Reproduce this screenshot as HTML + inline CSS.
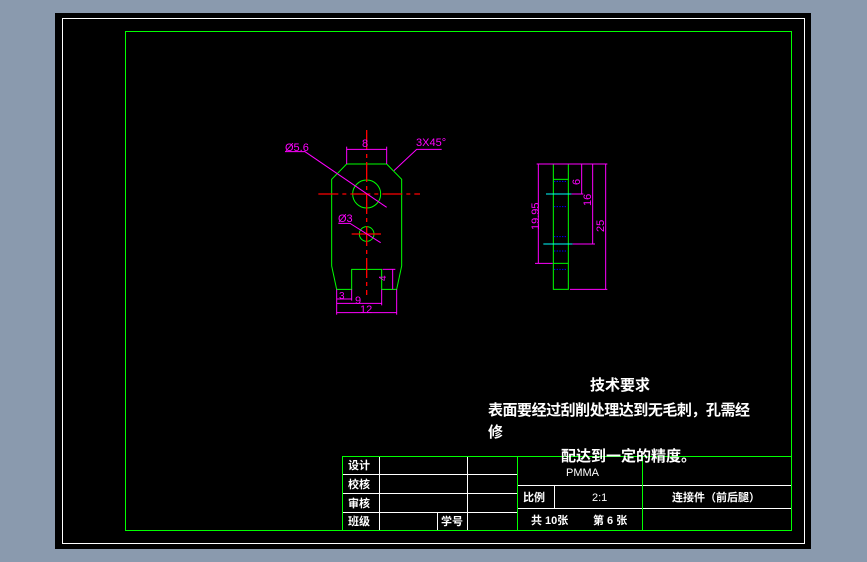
<!DOCTYPE html>
<html><head><meta charset="utf-8"><style>
html,body{margin:0;padding:0;width:867px;height:562px;overflow:hidden;background:#8a9aae;}
svg{display:block}
.cn{font-family:"Liberation Sans","WenQuanYi Zen Hei","Noto Sans CJK SC",sans-serif;fill:#fff;font-weight:bold}
.dm{font-family:"Liberation Sans",sans-serif;fill:#f0f;}
</style></head><body>
<svg width="867" height="562" viewBox="0 0 867 562" xmlns="http://www.w3.org/2000/svg">
<rect x="55" y="13" width="756" height="536" fill="#000"/>
<rect x="62.5" y="18.5" width="742" height="525" fill="none" stroke="#fff" stroke-width="1"/>
<rect x="125.5" y="31.5" width="666" height="499" fill="none" stroke="#0f0" stroke-width="1"/>

<g transform="translate(270,120) scale(0.33333)" fill="none" stroke-width="3">
 <polygon points="230,132 350,132 395,178 395,438 380,508 335,508 335,448 245,448 245,508 200,508 185,438 185,178" stroke="#0f0"/>
 <circle cx="290" cy="222" r="42" stroke="#0f0"/>
 <circle cx="290" cy="342" r="22" stroke="#0f0"/>
 <g stroke="#f00" stroke-width="4">
  <line x1="290" y1="30" x2="290" y2="525" stroke-dasharray="60,12,12,12"/>
  <line x1="145" y1="222" x2="450" y2="222" stroke-dasharray="60,12,12,12"/>
  <line x1="245" y1="342" x2="333" y2="342"/>
 </g>
 <g stroke="#f0f">
  <line x1="230" y1="88" x2="350" y2="88"/><line x1="230" y1="80" x2="230" y2="132"/><line x1="350" y1="80" x2="350" y2="132"/>
  <polyline points="45,95 105,95 350,262"/>
  <polyline points="515,88 440,88 372,152"/>
  <polyline points="205,310 240,310 332,368"/>
  <line x1="368" y1="448" x2="368" y2="508"/><line x1="338" y1="448" x2="376" y2="448"/>
  <line x1="200" y1="537" x2="245" y2="537"/><line x1="200" y1="550" x2="335" y2="550"/><line x1="200" y1="578" x2="380" y2="578"/>
  <line x1="200" y1="508" x2="200" y2="584"/><line x1="245" y1="508" x2="245" y2="542"/><line x1="335" y1="508" x2="335" y2="556"/><line x1="380" y1="508" x2="380" y2="584"/>
 </g>
 <rect x="850" y="132" width="45" height="376" stroke="#0f0"/>
 <line x1="850" y1="178" x2="895" y2="178" stroke="#0f0"/><line x1="850" y1="430" x2="895" y2="430" stroke="#0f0"/>
 <line x1="828" y1="222" x2="905" y2="222" stroke="#0ff"/><line x1="820" y1="372" x2="908" y2="372" stroke="#0ff"/>
 <g stroke="#00f" stroke-dasharray="4,4"><line x1="852" y1="184" x2="890" y2="184"/><line x1="852" y1="260" x2="890" y2="260"/><line x1="852" y1="350" x2="890" y2="350"/><line x1="852" y1="393" x2="890" y2="393"/><line x1="852" y1="448" x2="890" y2="448"/></g>
 <g stroke="#f0f">
  <line x1="800" y1="132" x2="1012" y2="132"/><line x1="900" y1="508" x2="1012" y2="508"/>
  <line x1="805" y1="132" x2="805" y2="430"/><line x1="795" y1="430" x2="848" y2="430"/>
  <line x1="935" y1="132" x2="935" y2="222"/><line x1="905" y1="222" x2="940" y2="222"/>
  <line x1="968" y1="132" x2="968" y2="372"/><line x1="908" y1="372" x2="975" y2="372"/>
  <line x1="1007" y1="132" x2="1007" y2="508"/>
 </g>
</g>
<g class="dm" font-size="11">
 <text x="285" y="151">Ø5.6</text>
 <text x="416" y="146">3X45°</text>
 <text x="362" y="147">8</text>
 <text x="338" y="222">Ø3</text>
 <text x="339" y="299" font-size="10">3</text>
 <text x="355" y="304">9</text>
 <text x="360" y="313">12</text>
 <text transform="translate(386,281) rotate(-90)" font-size="10">4</text>
 <text transform="translate(539,230) rotate(-90)">19.95</text>
 <text transform="translate(580,185) rotate(-90)">6</text>
 <text transform="translate(591,206) rotate(-90)">16</text>
 <text transform="translate(604,232) rotate(-90)">25</text>
</g>

<g stroke="#fff" stroke-width="1" fill="none">
 <line x1="342" y1="474.5" x2="518" y2="474.5"/><line x1="342" y1="493.5" x2="518" y2="493.5"/><line x1="342" y1="512.5" x2="518" y2="512.5"/>
 <line x1="379.5" y1="456" x2="379.5" y2="530"/><line x1="467.5" y1="456" x2="467.5" y2="530"/><line x1="437.5" y1="512" x2="437.5" y2="530"/>
 <line x1="518" y1="485.5" x2="791" y2="485.5"/><line x1="518" y1="508.5" x2="791" y2="508.5"/>
 <line x1="554.5" y1="485" x2="554.5" y2="508"/>
</g>
<g stroke="#0f0" stroke-width="1" fill="none">
 <rect x="342.5" y="456.5" width="449" height="74"/>
 <line x1="517.5" y1="456" x2="517.5" y2="530"/><line x1="642.5" y1="456" x2="642.5" y2="530"/>
</g>
<g class="cn" font-size="11">
 <text x="348" y="469">设计</text><text x="348" y="488">校核</text><text x="348" y="507">审核</text><text x="348" y="525">班级</text>
 <text x="441" y="525">学号</text>
 <text x="523" y="501">比例</text>
 <text x="531" y="524">共 10张</text><text x="593" y="524">第 6 张</text>
 <text x="716" y="501" text-anchor="middle">连接件（前后腿）</text>
</g>
<g font-family="Liberation Sans,sans-serif" fill="#fff" font-size="11">
 <text x="566" y="476">PMMA</text><text x="592" y="501">2:1</text>
</g>
<g class="cn" font-size="15">
 <text x="590" y="390">技术要求</text>
 <text x="488" y="415" textLength="262">表面要经过刮削处理达到无毛刺，孔需经</text>
 <text x="488" y="437">修</text>
 <text x="561" y="461">配达到一定的精度。</text>
</g>
</svg>
</body></html>
